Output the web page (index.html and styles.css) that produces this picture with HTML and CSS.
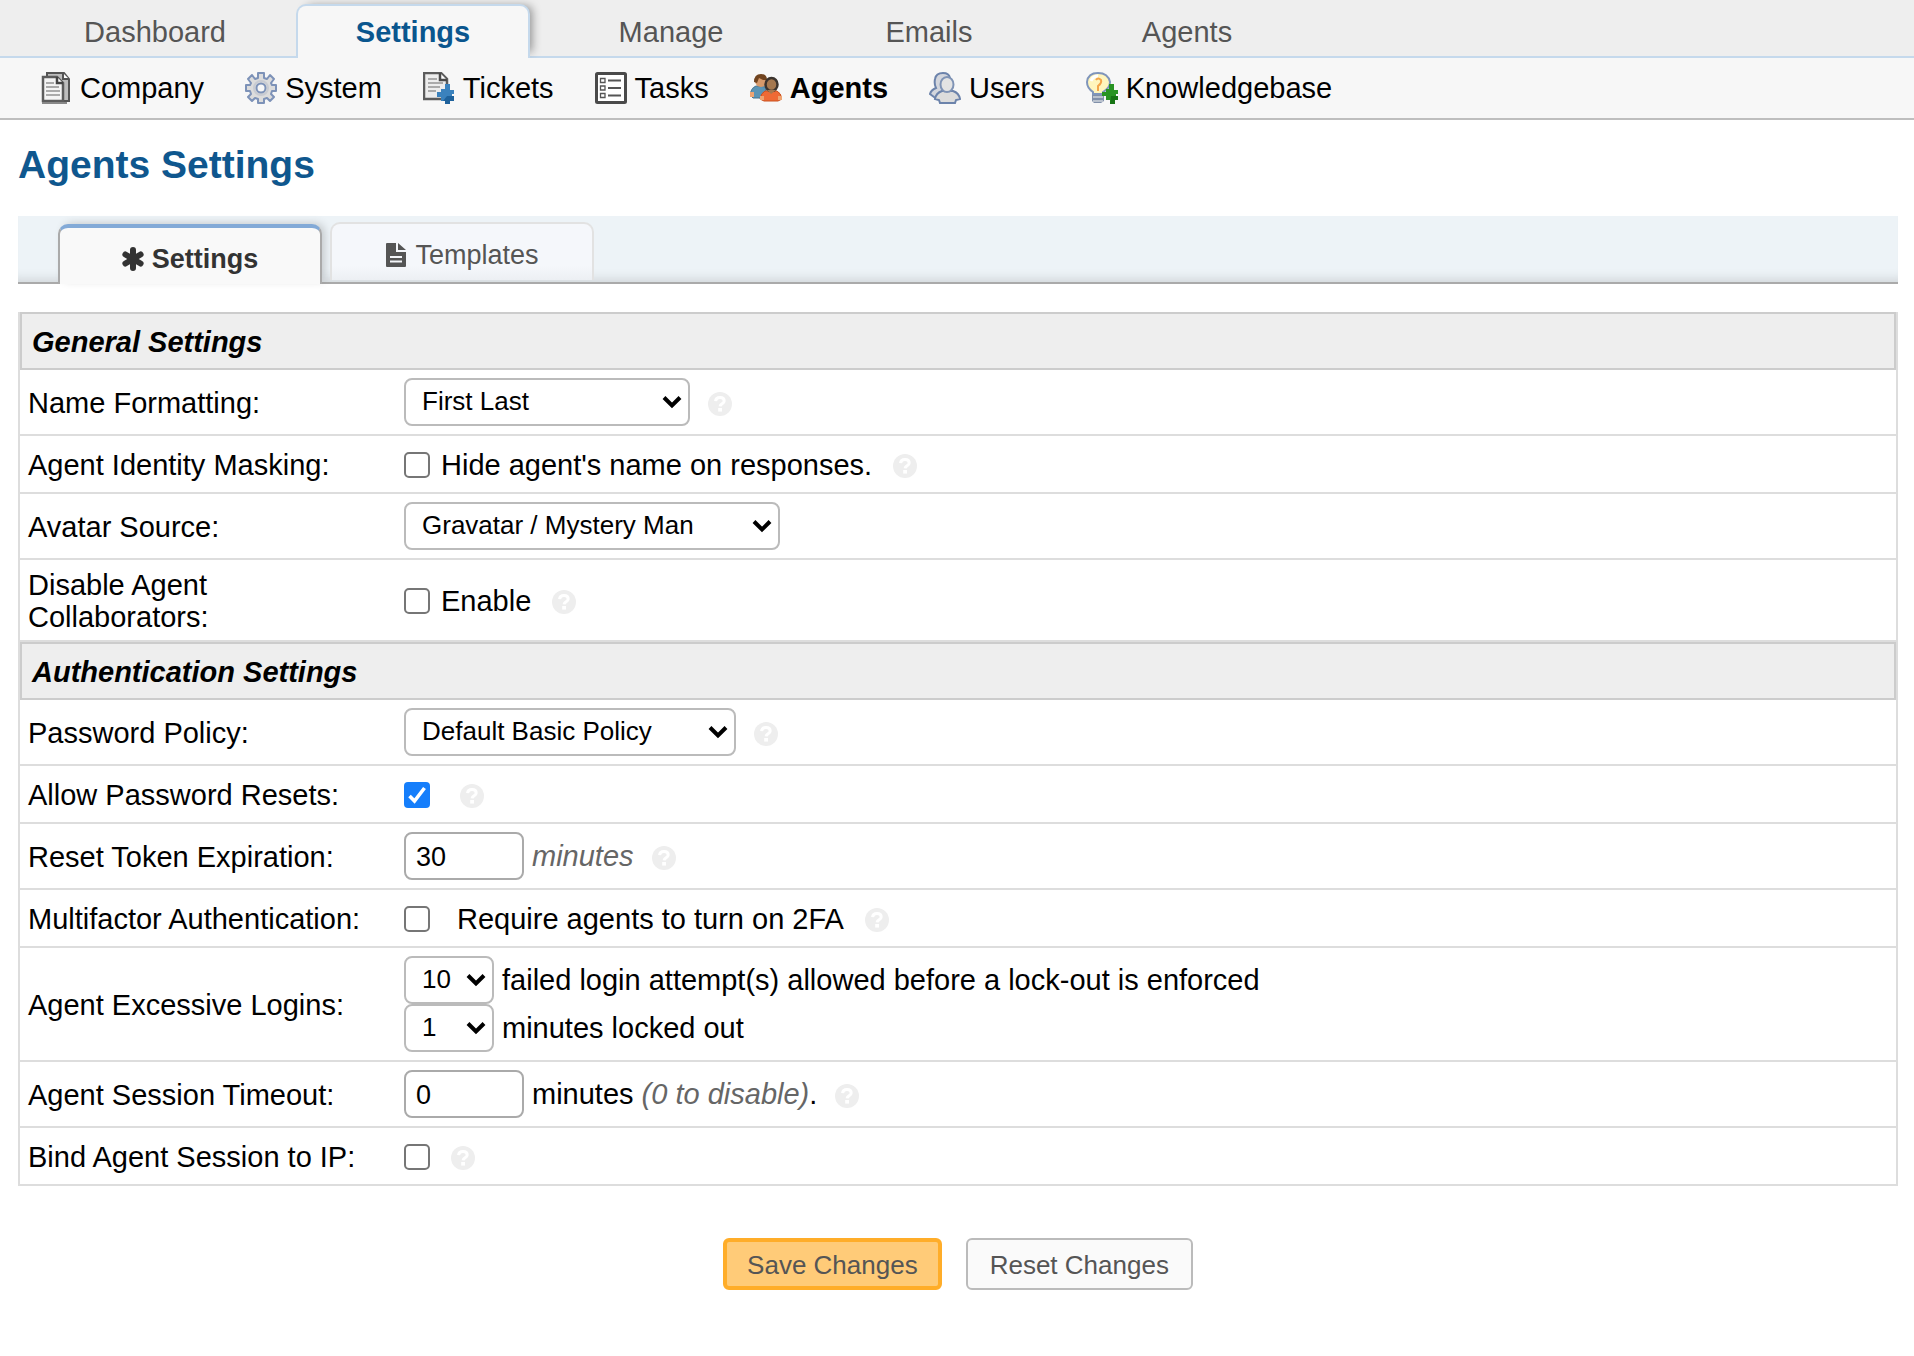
FILE: index.html
```html
<!DOCTYPE html>
<html lang="en">
<head>
<meta charset="utf-8">
<title>Agents Settings</title>
<meta name="viewport" content="width=device-width, initial-scale=1">
<link rel="stylesheet" href="styles.css">
</head>
<body>
<svg class="defs" width="0" height="0" aria-hidden="true">
  <symbol id="help" viewBox="0 0 24 24">
    <circle cx="12" cy="12" r="12" fill="#eee"/>
    <path d="M7.6 9.2C7.8 6.6 9.600 5.500 12 5.500C14.500 5.500 16.200 6.900 16.200 8.900C16.200 11.600 12.300 11.800 12.100 14.300" fill="none" stroke="#fff" stroke-width="3"/>
    <rect x="10.200" y="16" width="3.800" height="3.600" fill="#fff"/>
  </symbol>
</svg>

<nav class="nav" aria-label="Main">
  <a class="nav-tab" href="#">Dashboard</a>
  <a class="nav-tab active" href="#">Settings</a>
  <a class="nav-tab" href="#">Manage</a>
  <a class="nav-tab" href="#">Emails</a>
  <a class="nav-tab" href="#">Agents</a>
</nav>

<nav class="subnav" aria-label="Settings">
  <a href="#">
    <svg class="icon" viewBox="0 0 32 32" aria-hidden="true">
      <path d="M7 1H24L29 7V29H7Z" fill="#bdbdbd" stroke="#555" stroke-width="2"/>
      <path d="M3 5H17L23 11V29H3Z" fill="#f4f4f4" stroke="#5c5c5c" stroke-width="2.500"/>
      <path d="M17 5V11H23" fill="#fff" stroke="#444" stroke-width="2.500"/>
      <path d="M23 1V7H29" fill="#fff" stroke="#555" stroke-width="2"/>
      <path d="M6 11H14M6 15H19M6 19H20M6 23H20" stroke="#aaa" stroke-width="2"/>
      <path d="M2 31H27" stroke="#888" stroke-width="2"/>
    </svg>
    <span>Company</span>
  </a>
  <a href="#">
    <svg class="icon" viewBox="0 0 32 32" aria-hidden="true">
      <path d="M13 1H19V6L22 7L25 3L29 7L26 11L27 13H31V19H27L26 22L29 25L25 29L22 26L19 27V31H13V27L10 26L7 29L3 25L6 22L5 19H1V13H5L6 11L3 7L7 3L10 7L13 6Z" fill="#dcdcdc" stroke="#7d92b8" stroke-width="2" stroke-linejoin="round"/>
      <circle cx="16" cy="16" r="7" fill="none" stroke="#c8cbd2" stroke-width="2"/>
      <circle cx="16" cy="16" r="4.500" fill="#f7f7f7" stroke="#7d92b8" stroke-width="2"/>
    </svg>
    <span>System</span>
  </a>
  <a href="#">
    <svg class="icon" viewBox="0 0 32 32" aria-hidden="true">
      <path d="M1 1H18L24 7V27H1Z" fill="#ededed" stroke="#5c5c5c" stroke-width="2.500"/>
      <path d="M17 1V8H24" fill="#fff" stroke="#4a4a4a" stroke-width="2.500"/>
      <path d="M5 7H14M5 11H20M5 15H17M5 19H13" stroke="#aaa" stroke-width="2"/>
      <path d="M22 12H27V18H31V22H29V24H31V29H27V32H22V29H18V25H14V20H18V17H22Z" fill="#3b82bd"/>
      <path d="M24 24H31V29H27V32H22V29H20Z" fill="#1f629c"/>
    </svg>
    <span>Tickets</span>
  </a>
  <a href="#">
    <svg class="icon" viewBox="0 0 32 32" aria-hidden="true">
      <rect x="1.500" y="1.500" width="29" height="29" rx="1" fill="#fff" stroke="#4a4a4a" stroke-width="3"/>
      <path d="M5.500 6.500H10V10.500H5.500ZM5.500 14H10V18H5.500ZM5.500 21.500H10V25.500H5.500Z" fill="none" stroke="#555" stroke-width="1.300"/>
      <path d="M13 8.500H26M13 16H26M13 23.500H26" stroke="#555" stroke-width="2"/>
    </svg>
    <span>Tasks</span>
  </a>
  <a class="active" href="#">
    <svg class="icon" viewBox="0 0 32 32" aria-hidden="true">
      <path d="M6 14Q1 16 0 23L3 26H16V15Z" fill="#5b94b5" stroke="#47748f"/>
      <path d="M0 20H4V25H0Z" fill="#eea472"/>
      <circle cx="11" cy="9" r="6" fill="#d79a6b"/>
      <path d="M4 10Q4 2 11 2Q17 2 17 8L13 8L9 6L7 11Z" fill="#70431f"/>
      <path d="M15 19Q11 21 10 27L14 29H28L32 27Q31 21 27 19Z" fill="#ef6a35" stroke="#c9501f"/>
      <path d="M10 24H14V28H10ZM28 24H32V28H28Z" fill="#eea472"/>
      <ellipse cx="21.500" cy="12.500" rx="6" ry="6.500" fill="#a5784f" stroke="#3c342e" stroke-width="2.500"/>
      <path d="M17 18L21 22L26 18Z" fill="#a5784f"/>
    </svg>
    <span>Agents</span>
  </a>
  <a href="#">
    <svg class="icon" viewBox="0 0 32 32" aria-hidden="true">
      <path d="M7 16Q5 12 6 7Q7 1 14 1Q20 1 21 6L14 18L8 27L5 25L1 22Q2 18 7 16Z" fill="#d3d6dd" stroke="#6c83ab" stroke-width="2"/>
      <path d="M13 19Q7 21 6 27L10 28L11 31H26L27 28L31 27Q30 21 24 19Z" fill="#dcdcdc" stroke="#6c83ab" stroke-width="2"/>
      <ellipse cx="18" cy="12.500" rx="6.500" ry="7.500" fill="#e3e3e3" stroke="#7f93b5" stroke-width="2"/>
    </svg>
    <span>Users</span>
  </a>
  <a href="#">
    <svg class="icon" viewBox="0 0 32 32" aria-hidden="true">
      <path d="M7 20Q1 16 1 10Q2 1 12 1Q22 1 24 10Q24 16 17 20V22H7Z" fill="#fff5bd" stroke="#7f95bb" stroke-width="2"/>
      <path d="M5 9Q7 4 12 4" fill="none" stroke="#fff" stroke-width="3"/>
      <path d="M10 8Q12 5 15 8Q16 11 12 14V19" fill="none" stroke="#f5a54a" stroke-width="2"/>
      <path d="M6 23H18V29L15 31H8L6 29Z" fill="#8190aa"/>
      <path d="M7 25H17M7 29H17" stroke="#cdd2da" stroke-width="1.500"/>
      <path d="M23 12H28V18H32V22H30V24H32V28H29V32H24V28H20V24H16V20H20V17H23Z" fill="#299423"/>
      <path d="M25 24H32V28H29V32H24Z" fill="#177414"/>
    </svg>
    <span>Knowledgebase</span>
  </a>
</nav>

<main class="content">
  <h1>Agents Settings</h1>

  <div class="tabs">
    <a class="tab active" href="#">
      <svg class="tab-icon" viewBox="0 0 22 24" aria-hidden="true">
        <path d="M11 3V21M3.400 7.500L18.600 16.500M18.600 7.500L3.400 16.500" stroke="#333" stroke-width="6" stroke-linecap="round"/>
      </svg>
      <span>Settings</span>
    </a>
    <a class="tab" href="#">
      <svg class="tab-icon" viewBox="0 0 22 24" aria-hidden="true">
        <path d="M2 0H11V9H21V23Q21 24 20 24H2Q1 24 1 23V1Q1 0 2 0ZM13 0L21 7H13Z" fill="#555"/>
        <path d="M5 14H17M5 18.500H17" stroke="#f4f6fa" stroke-width="2"/>
      </svg>
      <span>Templates</span>
    </a>
  </div>

  <form>
    <table class="settings">
      <colgroup><col class="label-col"><col></colgroup>
      <thead><tr><th colspan="2">General Settings</th></tr></thead>
      <tbody>
        <tr>
          <td><label for="name-format">Name Formatting:</label></td>
          <td><div class="field">
            <select id="name-format" class="select-medium"><option>First Last</option></select>
            <svg class="help"><use href="#help"/></svg>
          </div></td>
        </tr>
        <tr>
          <td>Agent Identity Masking:</td>
          <td><div class="field check">
            <input type="checkbox" id="masking"><label for="masking">Hide agent's name on responses.</label>
            <svg class="help"><use href="#help"/></svg>
          </div></td>
        </tr>
        <tr>
          <td><label for="avatar">Avatar Source:</label></td>
          <td><div class="field">
            <select id="avatar" class="select-wide"><option>Gravatar / Mystery Man</option></select>
          </div></td>
        </tr>
        <tr>
          <td>Disable Agent<br>Collaborators:</td>
          <td><div class="field check">
            <input type="checkbox" id="collab"><label for="collab">Enable</label>
            <svg class="help"><use href="#help"/></svg>
          </div></td>
        </tr>
      </tbody>
      <thead><tr><th colspan="2">Authentication Settings</th></tr></thead>
      <tbody>
        <tr>
          <td><label for="policy">Password Policy:</label></td>
          <td><div class="field">
            <select id="policy" class="select-policy"><option>Default Basic Policy</option></select>
            <svg class="help"><use href="#help"/></svg>
          </div></td>
        </tr>
        <tr>
          <td><label for="resets">Allow Password Resets:</label></td>
          <td><div class="field check spaced">
            <input type="checkbox" id="resets" checked>
            <svg class="help"><use href="#help"/></svg>
          </div></td>
        </tr>
        <tr>
          <td><label for="token">Reset Token Expiration:</label></td>
          <td><div class="field">
            <input type="text" id="token" value="30"><em>minutes</em>
            <svg class="help"><use href="#help"/></svg>
          </div></td>
        </tr>
        <tr>
          <td>Multifactor Authentication:</td>
          <td><div class="field check">
            <input type="checkbox" id="mfa"><label for="mfa" class="indent">Require agents to turn on 2FA</label>
            <svg class="help"><use href="#help"/></svg>
          </div></td>
        </tr>
        <tr>
          <td>Agent Excessive Logins:</td>
          <td>
            <div class="field">
              <select id="attempts" class="select-small"><option>10</option></select>
              <label for="attempts">failed login attempt(s) allowed before a lock-out is enforced</label>
            </div>
            <div class="field">
              <select id="lockout" class="select-small"><option>1</option></select>
              <label for="lockout">minutes locked out</label>
            </div>
          </td>
        </tr>
        <tr>
          <td><label for="timeout">Agent Session Timeout:</label></td>
          <td><div class="field">
            <input type="text" id="timeout" value="0"><span>minutes <em>(0 to disable)</em>.</span>
            <svg class="help"><use href="#help"/></svg>
          </div></td>
        </tr>
        <tr>
          <td><label for="bind">Bind Agent Session to IP:</label></td>
          <td><div class="field check">
            <input type="checkbox" id="bind">
            <svg class="help"><use href="#help"/></svg>
          </div></td>
        </tr>
      </tbody>
    </table>

    <div class="actions">
      <button class="save" type="submit">Save Changes</button>
      <button class="reset" type="reset">Reset Changes</button>
    </div>
  </form>
</main>
</body>
</html>
```
FILE: styles.css
```css
* {
  box-sizing: border-box;
}

body {
  margin: 0;
  background: #fff;
  color: #000;
  font: 29px/32px "Liberation Sans", Arial, Helvetica, sans-serif;
}

a {
  color: inherit;
  text-decoration: none;
}

.defs {
  display: block;
}

/* Main navigation */
.nav {
  display: flex;
  gap: 24px;
  height: 58px;
  padding: 4px 38px 0;
  background: #eee;
  border-bottom: 2px solid #c5d9ec;
}

.nav-tab {
  width: 234px;
  height: 54px;
  padding-top: 12px;
  text-align: center;
  color: #555;
}

.nav-tab.active {
  padding-top: 10px;
  background: #f7f7f7;
  border: 2px solid #c5d9ec;
  border-bottom: 0;
  border-radius: 10px 10px 0 0;
  box-shadow: 6px -2px 10px -4px rgba(0, 0, 0, 0.4);
  color: #0a568e;
  font-weight: bold;
}

/* Section navigation */
.subnav {
  position: relative;
  display: flex;
  gap: 41px;
  height: 62px;
  padding: 0 40px;
  background: #f7f7f7;
  border-bottom: 2px solid #bebebe;
}

.subnav a {
  display: flex;
  align-items: center;
  gap: 8px;
}

.subnav .active {
  font-weight: bold;
}

.icon {
  width: 32px;
  height: 32px;
}

/* Page content */
.content {
  padding: 0 16px 0 18px;
}

h1 {
  margin: 0;
  padding: 21px 0 27px;
  color: #0f578e;
  font-size: 39px;
  line-height: 48px;
}

.tabs {
  display: flex;
  gap: 8px;
  height: 68px;
  margin-bottom: 28px;
  padding: 6px 40px 0;
  background: #edf3f7;
  border-bottom: 2px solid #aaa;
  box-shadow: inset 0 -12px 12px -10px rgba(0, 0, 0, 0.14);
  font-size: 27px;
}

.tab {
  display: flex;
  justify-content: center;
  align-items: center;
  gap: 8px;
  width: 264px;
  height: 58px;
  padding-top: 5px;
  border: 2px solid #e2e2e2;
  border-bottom: 0;
  border-radius: 10px 10px 0 0;
  background: linear-gradient(#f5f7fb 75%, #eceff3);
  color: #555;
}

.tab.active {
  height: 60px;
  margin-top: 2px;
  border-color: #aaa;
  border-top: 4px solid #83aad7;
  background: #f9f9f9;
  box-shadow: 4px -2px 10px -2px rgba(0, 0, 0, 0.2);
  color: #333;
  font-weight: bold;
}

.tab-icon {
  width: 22px;
  height: 24px;
}

/* Settings table */
.settings {
  width: 100%;
  border: solid #ddd;
  border-width: 0 2px;
  border-spacing: 0;
  table-layout: fixed;
}

.label-col {
  width: 376px;
}

th {
  height: 58px;
  padding: 2px 10px 0;
  border: 2px solid #ccc;
  background: #eee;
  font-style: italic;
  text-align: left;
}

td {
  height: 58px;
  padding: 8px;
  border-bottom: 2px solid #ddd;
}

td:first-child {
  padding: 9px 0 7px 8px;
}

.field {
  display: flex;
  align-items: center;
  gap: 8px;
}

.field.check {
  gap: 11px;
  padding-top: 2px;
}

.field.spaced {
  gap: 20px;
}

.indent {
  padding-left: 16px;
}

em {
  color: #666;
}

.help {
  width: 24px;
  height: 24px;
  margin: 4px 0 0 10px;
}

.check .help {
  margin-top: 2px;
}

select,
input {
  margin: 0;
  background: #fff;
  color: #000;
}

select,
input[type="text"] {
  height: 48px;
  border: 2px solid #bbb;
  border-radius: 8px;
}

select {
  appearance: none;
  padding: 0 36px 2px 16px;
  background: #fff url("data:image/svg+xml,%3Csvg xmlns='http://www.w3.org/2000/svg' viewBox='0 0 20 14'%3E%3Cpath d='M2 2.500L10 10.500L18 2.500' fill='none' stroke='black' stroke-width='4'/%3E%3C/svg%3E") no-repeat right 6px center / 20px 14px;
  font: 26px "Liberation Sans", Arial, Helvetica, sans-serif;
}

.select-medium {
  width: 286px;
}

.select-wide {
  width: 376px;
}

.select-policy {
  width: 332px;
}

.select-small {
  width: 90px;
}

input[type="text"] {
  width: 120px;
  padding: 2px 10px 0;
  border-color: #aaa;
  font: 27px "Liberation Sans", Arial, Helvetica, sans-serif;
}

input[type="checkbox"] {
  appearance: none;
  width: 26px;
  height: 26px;
  border: 2px solid #767676;
  border-radius: 5px;
}

input[type="checkbox"]:checked {
  border: 0;
  border-radius: 4px;
  background: #157efb url("data:image/svg+xml,%3Csvg xmlns='http://www.w3.org/2000/svg' viewBox='0 0 26 26'%3E%3Cpath d='M5.500 14L10.500 19L20.500 6' fill='none' stroke='white' stroke-width='3.600'/%3E%3C/svg%3E");
}

/* Form buttons */
.actions {
  display: flex;
  justify-content: center;
  gap: 24px;
  padding: 52px 0;
}

button {
  height: 52px;
  border-radius: 6px;
  color: #555;
  font: 26px "Liberation Sans", Arial, Helvetica, sans-serif;
}

.save {
  padding: 2px 20px 0;
  border: 4px solid #ffad29;
  background: #ffcb78;
}

.reset {
  padding: 2px 22px 0;
  border: 2px solid #bbb;
  background: #fafafa;
}
```
